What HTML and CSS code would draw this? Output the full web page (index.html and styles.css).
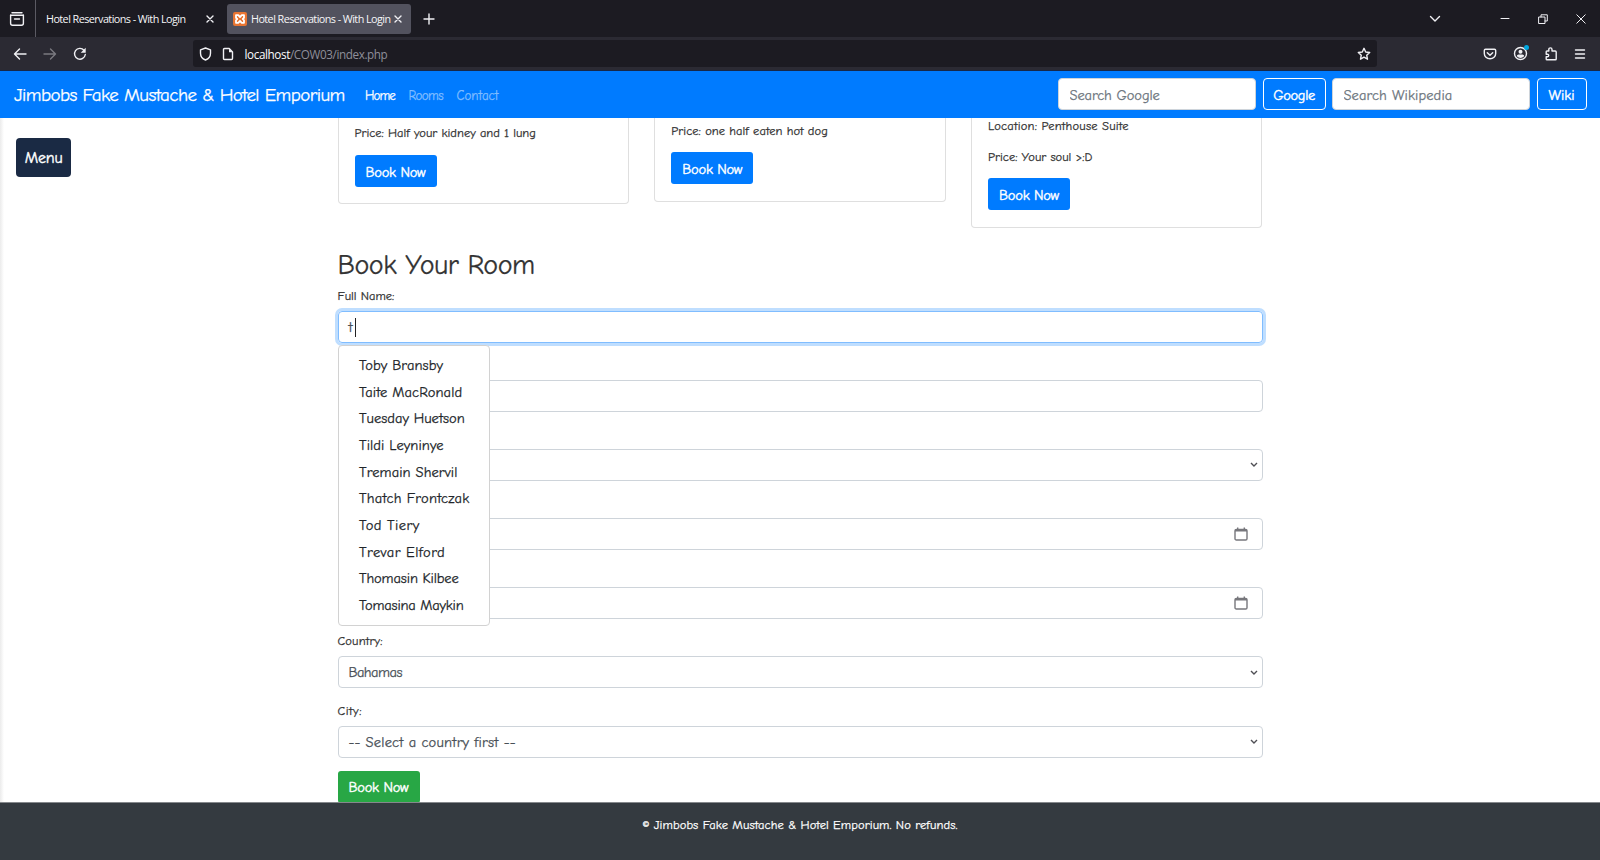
FILE: index.html
```
<!DOCTYPE html>
<html lang="en">
<head>
<meta charset="utf-8">
<title>Hotel Reservations - With Login</title>
<link rel="stylesheet" href="styles.css">
</head>
<body>
<header class="tabs">
  <div class="tabs-view"><svg class="icon" width="16" height="16" viewBox="0 0 16 16"><path d="M3 1.700h10M1.600 4.300h12.800M5.500 8h5"/><path d="M1.600 4.300v8q0 2 2 2h8.800q2 0 2-2v-8"/></svg></div>
  <div class="tab"><span class="tab-title">Hotel Reservations - With Login</span><svg class="icon tab-x" width="8" height="8" viewBox="0 0 8 8"><path d="M1 1l6 6M7 1L1 7"/></svg></div>
  <div class="tab tab-active"><svg class="favicon" width="14" height="14" viewBox="0 0 14 14"><rect width="14" height="14" rx="2"/><path d="M3 3.200h2.200L7 5l1.800-1.800H11v2.600L9.800 7 11 8.200v2.600H8.800L7 9l-1.800 1.800H3V8.200L4.200 7 3 5.800z"/></svg><span class="tab-title">Hotel Reservations - With Login</span><svg class="icon tab-x" width="8" height="8" viewBox="0 0 8 8"><path d="M1 1l6 6M7 1L1 7"/></svg></div>
  <svg class="icon new-tab" width="12" height="12" viewBox="0 0 12 12"><path d="M6 1v10M1 6h10"/></svg>
  <div class="window-controls">
    <svg class="icon list-tabs" width="12" height="12" viewBox="0 0 12 12"><path d="M1.500 3.500L6 8l4.500-4.500"/></svg>
    <svg class="icon thin" width="10" height="10" viewBox="0 0 10 10"><path d="M1 4.500h8"/></svg>
    <svg class="icon thin" width="10" height="10" viewBox="0 0 10 10"><path d="M1 3h6v6.500H1zM3 3V.8h6.300V7H7"/></svg>
    <svg class="icon thin" width="10" height="10" viewBox="0 0 10 10"><path d="M.8.8l8.400 8.400M9.200.8L.8 9.200"/></svg>
  </div>
</header>
<div class="toolbar">
  <div class="nav-buttons">
    <svg class="icon" width="14" height="14" viewBox="0 0 14 14"><path d="M13 7H1.500M6.500 2l-5 5 5 5"/></svg>
    <svg class="icon dim" width="14" height="14" viewBox="0 0 14 14"><path d="M1 7h11.500M7.500 2l5 5-5 5"/></svg>
    <svg class="icon" width="14" height="14" viewBox="0 0 14 14"><path d="M11 3.200A5.400 5.400 0 1 0 12.300 7.500"/><path class="solid" d="M12.700.8v5h-5z"/></svg>
  </div>
  <div class="url">
    <svg class="icon" width="13" height="14" viewBox="0 0 13 14"><path d="M6.500 1l5 1.800v3.400c0 3.300-1.800 5.500-5 6.800-3.200-1.300-5-3.500-5-6.800V2.800z"/></svg>
    <svg class="icon" width="12" height="14" viewBox="0 0 12 14"><path d="M2.500 1.500h4.700L10.500 5v6.500q0 1-1 1h-7q-1 0-1-1v-9q0-1 1-1z"/><path class="solid" d="M7 1.500V5.300h3.700z"/></svg>
    <span class="address">localhost<span class="path">/COW03/index.php</span></span>
    <svg class="icon star" width="14" height="14" viewBox="0 0 14 14"><path d="M7 1.300l1.700 3.700 4 .5-3 2.700.8 4L7 10.200l-3.500 2 .8-4-3-2.700 4-.5z"/></svg>
  </div>
  <div class="extras">
    <svg class="icon" width="14" height="14" viewBox="0 0 14 14"><path d="M2.500 2.200h9q1.200 0 1.200 1.200V6.500c0 3-2.500 5.300-5.700 5.300S1.300 9.500 1.300 6.500V3.400q0-1.200 1.200-1.200zM4.300 5.700L7 8.300l2.700-2.600"/></svg>
    <svg class="icon account" width="16" height="16" viewBox="0 0 16 16"><circle cx="7.500" cy="8.500" r="6"/><circle class="solid" cx="7.500" cy="6.800" r="2"/><path class="solid" d="M3.800 11.300q0-1.800 1.800-1.800h3.800q1.800 0 1.800 1.800-3.700 3.500-7.400 0z"/><circle class="notice" cx="13.500" cy="2.500" r="2.500"/></svg>
    <svg class="icon" width="14" height="14" viewBox="0 0 14 14"><path d="M4.800 4V2.500a1.600 1.600 0 0 1 3.200 0V4h3.200q1 0 1 1v7q0 .8-.8.800H3q-.8 0-.8-.8V9.800h1.200a1.300 1.300 0 0 0 0-2.600H2.200V4.800q0-.8.800-.8z"/></svg>
    <svg class="icon" width="12" height="12" viewBox="0 0 12 12"><path d="M1.500 2h9M1.500 6h9M1.500 10h9"/></svg>
  </div>
</div>

<nav class="navbar">
  <a class="brand">Jimbobs Fake Mustache &amp; Hotel Emporium</a>
  <a class="link link-home">Home</a><a class="link link-rooms faded">Rooms</a><a class="link link-contact faded">Contact</a>
  <div class="searches">
    <input class="search search-google" placeholder="Search Google"><button class="outline outline-google">Google</button>
    <input class="search search-wiki" placeholder="Search Wikipedia"><button class="outline outline-wiki">Wiki</button>
  </div>
</nav>

<main class="page">
  <aside class="side"><button class="menu-button">Menu</button></aside>
  <div class="container">
    <section class="cards">
      <article class="card card-one"><p class="kidney">Price: Half your kidney and 1 lung</p><button class="btn">Book Now</button></article>
      <article class="card card-two"><p class="hotdog">Price: one half eaten hot dog</p><button class="btn">Book Now</button></article>
      <article class="card card-three"><p class="penthouse">Location: Penthouse Suite</p><p class="soul">Price: Your soul &gt;:D</p><button class="btn">Book Now</button></article>
    </section>
    <h2 class="heading">Book Your Room</h2>
    <form class="form">
      <div class="row"><label class="label label-name">Full Name:</label>
        <div class="field focused"><span class="typed">t</span><span class="caret"></span></div>
        <ul class="suggestions">
          <li class="s1">Toby Bransby</li><li class="s2">Taite MacRonald</li><li class="s3">Tuesday Huetson</li><li class="s4">Tildi Leyninye</li><li class="s5">Tremain Shervil</li><li class="s6">Thatch Frontczak</li><li class="s7">Tod Tiery</li><li class="s8">Trevar Elford</li><li class="s9">Thomasin Kilbee</li><li class="s10">Tomasina Maykin</li>
        </ul>
      </div>
      <div class="row"><label class="label"></label><div class="field"></div></div>
      <div class="row"><label class="label"></label><div class="field"><svg class="arrow" width="8" height="6" viewBox="0 0 8 6"><path d="M1 1l3 3 3-3"/></svg></div></div>
      <div class="row"><label class="label"></label><div class="field field-date"><svg class="calendar" width="14" height="14" viewBox="0 0 14 14"><rect x="1" y="2.500" width="12" height="10.500" rx="1.300"/><path d="M1 3.800h12M3.700.5v2M10.300.5v2"/></svg></div></div>
      <div class="row"><label class="label"></label><div class="field field-date"><svg class="calendar" width="14" height="14" viewBox="0 0 14 14"><rect x="1" y="2.500" width="12" height="10.500" rx="1.300"/><path d="M1 3.800h12M3.700.5v2M10.300.5v2"/></svg></div></div>
      <div class="row"><label class="label label-country">Country:</label><div class="field"><span class="bahamas">Bahamas</span><svg class="arrow" width="8" height="6" viewBox="0 0 8 6"><path d="M1 1l3 3 3-3"/></svg></div></div>
      <div class="row"><label class="label label-city">City:</label><div class="field"><span class="select-city">-- Select a country first --</span><svg class="arrow" width="8" height="6" viewBox="0 0 8 6"><path d="M1 1l3 3 3-3"/></svg></div></div>
      <button type="button" class="btn btn-green">Book Now</button>
    </form>
  </div>
</main>
<footer class="footer"><span class="copyright">© Jimbobs Fake Mustache &amp; Hotel Emporium. No refunds.</span></footer>
</body>
</html>
```
FILE: styles.css
```
* { box-sizing: border-box; }
body { margin: 0; height: 860px; overflow: hidden; display: flex; flex-direction: column; background: #fff; color: #212529; font-family: "Comic Sans MS", "Comic Neue", Lato, sans-serif; font-size: 14.5px; }
button, input { font-family: inherit; font-size: inherit; }
svg { flex: none; display: block; }
.icon { fill: none; stroke: #f0f0f4; stroke-width: 1.4; stroke-linecap: round; stroke-linejoin: round; }
.icon .solid { fill: #f0f0f4; stroke: none; }
.thin { stroke-width: 1; }
.dim { opacity: .4; }

.tabs { height: 37px; flex: none; display: flex; align-items: center; background: #1c1b22; color: #f6f6f8; font-family: "Open Sans", sans-serif; font-size: 10.800px; }
.tabs-view { width: 36px; height: 37px; border-right: 1px solid #5b5a63; display: flex; align-items: center; padding-left: 9px; }
.tab { width: 191px; height: 30px; border-radius: 3px; display: flex; align-items: center; padding: 0 13px 0 10px; white-space: nowrap; letter-spacing: -.56px; }
.tab .tab-title { flex: 1; }
.tab-active { width: 184px; background: #52525e; padding: 0 9px 0 6px; gap: 4px; }
.tab-active .tab-x { margin-left: -4px; }
.favicon rect { fill: #e87532; }
.favicon path { fill: none; stroke: #fff; stroke-width: 1.8; stroke-linejoin: round; }
.new-tab { margin-left: 12px; }
.window-controls { margin-left: auto; padding-right: 14px; display: flex; align-items: center; gap: 28px; }
.list-tabs { margin-right: 31px; }

.toolbar { height: 34px; flex: none; display: flex; align-items: center; background: #2b2a33; border-bottom: 1px solid #172849; }
.nav-buttons { width: 192.500px; padding-left: 13px; display: flex; gap: 16px; }
.url { width: 1184.500px; height: 27px; border-radius: 3px; background: #1c1b22; display: flex; align-items: center; padding: 0 6px; gap: 10.500px; }
.address { font: 11.700px "Open Sans", sans-serif; color: #fbfbfe; letter-spacing: -.39px; padding-top: 1px; }
.path { color: #8f8f9a; }
.star { margin-left: auto; }
.extras { margin-left: auto; padding-right: 14px; display: flex; align-items: center; gap: 16px; }
.account { margin: -2px -1px 0 0; }
.icon .notice { fill: #00a7e0; stroke: none; }

.navbar, .page, .footer { -webkit-text-stroke: .25px currentColor; }
.navbar { height: 46.500px; flex: none; display: flex; align-items: center; background: #007bff; color: #fff; padding: 0 13.500px 0 14px; font-size: 13px; }
.brand { width: 351px; padding-top: 1px; font-size: 19px; white-space: nowrap; letter-spacing: -.58px; }
.link { white-space: nowrap; padding-top: 2px; }
.link-home { width: 43.500px; letter-spacing: -.9px; }
.link-rooms { width: 48px; letter-spacing: -.600px; }
.faded { color: #80bdff; }
.searches { margin-left: auto; display: flex; gap: 6.500px; font-size: 14.500px; }
.search { width: 198px; height: 32px; border: 1px solid #ced4da; border-radius: 4px; padding: 2px 10px 0 10.500px; color: #495057; letter-spacing: -.1px; -webkit-text-stroke: inherit; }
.search::placeholder { color: #6c757d; opacity: 1; }
.search-wiki { letter-spacing: .1px; }
.outline { height: 32px; border: 1px solid #fff; border-radius: 4px; background: none; color: #fff; padding: 2px 0 0; -webkit-text-stroke: .4px currentColor; }
.outline-google { width: 63px; letter-spacing: -.35px; }
.outline-wiki { width: 50px; }

.page { flex: 1; min-height: 0; display: grid; grid-template-columns: 337.500px 925px; overflow: hidden; }
.side { padding: 20px 16.400px; background: linear-gradient(90deg, #ebebeb, #fff 4px); }
.menu-button { width: 54.500px; height: 39px; border: 0; border-radius: 4px; background: #1a2a44; color: #fff; padding: 2px 0 0; font-size: 16px; letter-spacing: -.2px; -webkit-text-stroke: .4px currentColor; }
.cards { height: 129px; display: grid; grid-template-columns: repeat(3, 291.400px); column-gap: 25.400px; align-items: start; }
.card { border: 1px solid #dfdfdf; border-top: 0; border-radius: 0 0 4px 4px; padding: 0 16px; font-size: 12.500px; color: #333; }
.card-one { height: 86px; padding-top: 5px; }
.card-two { height: 84px; padding-top: 3.500px; }
.card-three { height: 110px; }
.card p { margin: 0; height: 32.500px; line-height: 20px; white-space: nowrap; }
.card .penthouse { height: 31px; line-height: 16px; letter-spacing: .2px; }
.card .soul { height: 29.500px; line-height: 16px; }
.card .hotdog { letter-spacing: .05px; height: 31px; }
.btn { width: 82px; height: 32px; border: 0; border-radius: 3px; background: #007bff; color: #fff; padding: 2px 0 0; font-size: 14.500px; letter-spacing: -.25px; display: block; -webkit-text-stroke: .4px currentColor; }
.heading { margin: 0; height: 39px; line-height: 36px; font-size: 28px; font-weight: 400; color: #333; white-space: nowrap; letter-spacing: -.45px; }
.form { display: block; }
.row { height: 69.200px; position: relative; }
.label { display: block; height: 25px; line-height: 21px; font-size: 12.500px; color: #333; }
.label-city { letter-spacing: .5px; }
.label-country { letter-spacing: .15px; }
.field { height: 32px; border: 1px solid #ced4da; border-radius: 4px; display: flex; align-items: center; padding: 1px 4px 0 10px; color: #495057; }
.bahamas { letter-spacing: -.55px; }
.select-city { letter-spacing: .2px; }
.focused { border-color: #80bdff; box-shadow: 0 0 0 3px #bfdeff; }
.typed { width: 5.500px; }
.caret { width: 1px; height: 19px; margin-left: 1px; background: #222; }
.arrow, .calendar { margin-left: auto; fill: none; stroke: #4f4f55; stroke-width: 1.4; }
.field-date { padding-right: 14px; padding-top: 0; }
.calendar { stroke: #77777c; }
.suggestions { position: absolute; z-index: 2; left: 0; top: 59px; width: 152px; height: 281px; margin: 0; padding: 7.500px 0 0 20.500px; list-style: none; background: #fff; border: 1px solid #d2d2d2; border-radius: 4px; white-space: nowrap; }
.suggestions li { height: 26.670px; line-height: 26.670px; }
.s1, .s2, .s4, .s5 { letter-spacing: .08px; }
.s6 { letter-spacing: .22px; }
.s7, .s8 { letter-spacing: .42px; }
.s9 { letter-spacing: -.13px; }
.s10 { letter-spacing: -.2px; }
.btn-green { background: #28a745; margin-top: .8px; }
.footer { height: 58px; flex: none; background: #343a40; border-top: 1px solid #85888c; color: #fff; text-align: center; padding-top: 13px; font-size: 12.500px; line-height: 18px; letter-spacing: .1px; }
```
